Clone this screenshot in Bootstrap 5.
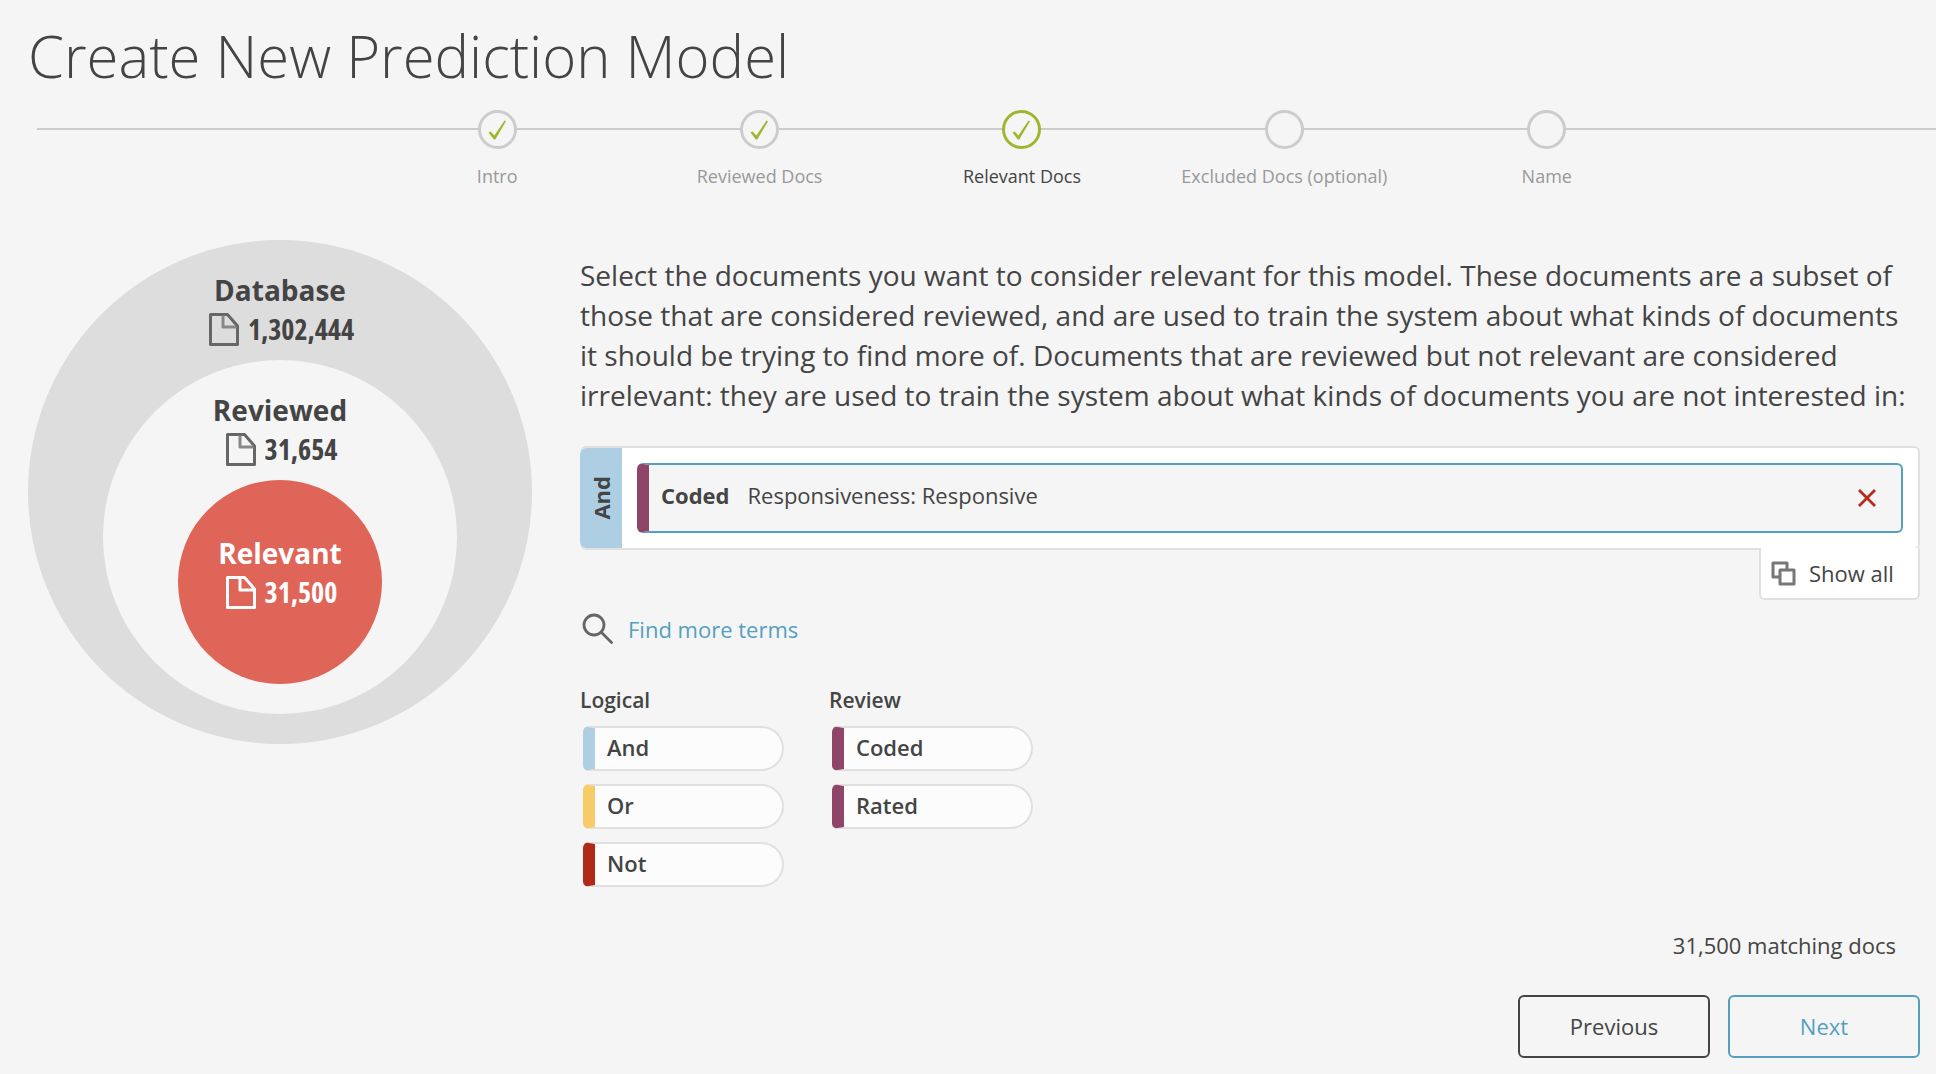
<!DOCTYPE html>
<html lang="en">
<head>
<meta charset="utf-8">
<title>Create New Prediction Model</title>
<link href="https://cdn.jsdelivr.net/npm/bootstrap@5.3.0/dist/css/bootstrap.min.css" rel="stylesheet">
<style>
html,body{height:100%;}
body{background:#f5f5f5;color:#444;font-family:"Open Sans","Noto Sans",sans-serif;font-size:22px;overflow:hidden;}
.page-title{font-family:"Open Sans",sans-serif;font-weight:300;font-size:58px;line-height:82px;margin:15px 0 0 28px;color:#444;}
.stepper{margin:13px 0 0 37px;height:86px;padding-left:329px;background:linear-gradient(#ccc,#ccc) no-repeat 0 18px/100% 2px;}
.step{width:262.4px;flex:none;font-size:18px;color:#999;line-height:24px;}
.step-dot{width:39px;height:39px;flex:none;border:3px solid #ccc;border-radius:50%;background:#f5f5f5;margin-bottom:15px;}
.step.is-current{color:#444;}
.step.is-current .step-dot{border-color:#a2b52e;}
.venn-col{width:504px;margin:44px 0 0 28px;flex:none;}
.venn{border-radius:50%;}
.venn-a{width:504px;height:504px;background:#ddd;padding-top:32px;}
.venn-b{width:354px;height:354px;background:#f5f5f5;padding-top:32px;}
.venn-c{width:204px;height:204px;background:#de6557;color:#fff;padding-top:55px;}
.venn-head{height:88px;text-align:center;}
.venn-c .venn-head{height:auto;}
.venn-name{font-weight:700;font-size:28px;line-height:36px;}
.venn-count{font-weight:700;font-size:28px;line-height:38px;gap:9px;margin-top:2px;padding-left:3px;}
.venn-num{display:inline-block;font-stretch:condensed;}
.main-col{width:1340px;margin:59px 0 0 48px;flex:none;}
.intro{font-size:28px;line-height:40px;margin:0 0 31px;white-space:nowrap;}
.query-box{height:104px;background:#fff;border:2px solid #e0e0e0;border-left:0;border-radius:6px;}
.query-tab{width:42px;background:#aecfe3;border-radius:6px 0 0 6px;font-weight:700;font-size:22px;}
.query-tab span{writing-mode:vertical-rl;transform:rotate(180deg);}
.query-chip{flex:1;height:70px;margin:0 15px 0 15px;background:#f5f5f5;border:2px solid #559fc0;border-left:12px solid #8e4568;border-radius:6px;padding:0 25px 6px 12px;}
.query-chip svg{margin-top:6px;}
.chip-kind{font-weight:700;margin-right:18px;}
.show-all{width:161px;height:52px;background:#fff;border:2px solid #e0e0e0;border-top:0;border-radius:0 0 6px 6px;gap:13px;padding-left:10px;margin-left:auto;margin-top:-2px;line-height:1;}
.find-more{color:#559fc0;gap:15px;margin:13px 0 0 2px;line-height:30px;text-decoration:none;}
.palette{margin-top:41px;gap:45px;}
.pal-title{font-weight:600;font-size:21px;line-height:30px;margin:0 0 11px 0;}
.pill{width:201px;height:45px;margin:0 0 13px 3px;background:#fcfcfc;border:2px solid #e0e0e0;border-left:12px solid;border-radius:6px 23px 23px 6px;font-weight:600;padding:0 0 3px 12px;line-height:1;}
.c-and{border-left-color:#aecfe3;}
.c-or{border-left-color:#f8cb69;}
.c-not{border-left-color:#b12a18;}
.c-rev{border-left-color:#8e4568;}
.match{margin:30px 0 0;padding-right:24px;line-height:30px;text-align:right;}
.foot-btns{gap:18px;margin-top:35px;}
.act-btn{width:192px;height:63px;border:2px solid #444;border-radius:6px;background:transparent;color:#444;font-size:22px;padding:0;}
.act-btn.is-next{border-color:#559fc0;color:#559fc0;}
</style>
</head>
<body>
<h1 class="page-title">Create New Prediction Model</h1>

<div class="stepper d-flex">
  <div class="step d-flex flex-column align-items-center">
    <div class="step-dot d-flex align-items-center justify-content-center"><svg width="33" height="33" viewBox="0 0 33 33"><path fill="#a2b52e" d="M7.500 19.500 9.600 18.500 13.400 22.400 23.500 7.500 25 8.300 14.300 26.500 12.800 26.500Z"/></svg></div>
    <div>Intro</div>
  </div>
  <div class="step d-flex flex-column align-items-center">
    <div class="step-dot d-flex align-items-center justify-content-center"><svg width="33" height="33" viewBox="0 0 33 33"><path fill="#a2b52e" d="M7.500 19.500 9.600 18.500 13.400 22.400 23.500 7.500 25 8.300 14.300 26.500 12.800 26.500Z"/></svg></div>
    <div>Reviewed Docs</div>
  </div>
  <div class="step is-current d-flex flex-column align-items-center">
    <div class="step-dot d-flex align-items-center justify-content-center"><svg width="33" height="33" viewBox="0 0 33 33"><path fill="#a2b52e" d="M7.500 19.500 9.600 18.500 13.400 22.400 23.500 7.500 25 8.300 14.300 26.500 12.800 26.500Z"/></svg></div>
    <div>Relevant Docs</div>
  </div>
  <div class="step d-flex flex-column align-items-center">
    <div class="step-dot"></div>
    <div>Excluded Docs (optional)</div>
  </div>
  <div class="step d-flex flex-column align-items-center">
    <div class="step-dot"></div>
    <div>Name</div>
  </div>
</div>

<div class="d-flex">
  <div class="venn-col">
    <div class="venn venn-a d-flex flex-column align-items-center">
      <div class="venn-head">
        <div class="venn-name">Database</div>
        <div class="venn-count d-flex align-items-center justify-content-center">
          <svg width="30" height="33" viewBox="0 0 30 33" fill="none" stroke="#666" stroke-width="3" stroke-linejoin="round"><path d="M1.500 1.500H18.500L28.500 13V31.500H1.500Z"/><path d="M14 2.500V14H27.500" stroke="#888"/></svg>
          <span class="venn-num">1,302,444</span>
        </div>
      </div>
      <div class="venn venn-b d-flex flex-column align-items-center">
        <div class="venn-head">
          <div class="venn-name">Reviewed</div>
          <div class="venn-count d-flex align-items-center justify-content-center">
            <svg width="30" height="33" viewBox="0 0 30 33" fill="none" stroke="#666" stroke-width="3" stroke-linejoin="round"><path d="M1.500 1.500H18.500L28.500 13V31.500H1.500Z"/><path d="M14 2.500V14H27.500" stroke="#888"/></svg>
            <span class="venn-num">31,654</span>
          </div>
        </div>
        <div class="venn venn-c d-flex flex-column align-items-center">
          <div class="venn-head">
            <div class="venn-name">Relevant</div>
            <div class="venn-count d-flex align-items-center justify-content-center">
              <svg width="30" height="33" viewBox="0 0 30 33" fill="none" stroke="#fff" stroke-width="3" stroke-linejoin="round"><path d="M1.500 1.500H18.500L28.500 13V31.500H1.500Z"/><path d="M14 2.500V14H27.500"/></svg>
              <span class="venn-num">31,500</span>
            </div>
          </div>
        </div>
      </div>
    </div>
  </div>

  <div class="main-col">
    <p class="intro">Select the documents you want to consider relevant for this model. These documents are a subset of<br>those that are considered reviewed, and are used to train the system about what kinds of documents<br>it should be trying to find more of. Documents that are reviewed but not relevant are considered<br>irrelevant: they are used to train the system about what kinds of documents you are not interested in:</p>

    <div class="query-box d-flex align-items-center">
      <div class="query-tab align-self-stretch d-flex align-items-center justify-content-center"><span>And</span></div>
      <div class="query-chip d-flex align-items-center">
        <span class="chip-kind">Coded</span>
        <span>Responsiveness: Responsive</span>
        <svg class="ms-auto" width="18" height="18" viewBox="0 0 18 18" stroke="#b52a1a" stroke-width="2.800" fill="none"><path d="M1 1 17 17M17 1 1 17"/></svg>
      </div>
    </div>
    <div class="show-all d-flex align-items-center">
      <svg width="25" height="25" viewBox="0 0 25 25" fill="none" stroke="#777" stroke-width="3" stroke-linejoin="round"><path d="M9 16H2V2H16V9"/><rect x="9" y="9" width="14" height="14"/></svg>
      <span>Show all</span>
    </div>

    <a class="find-more d-flex align-items-center" href="#">
      <svg width="31" height="31" viewBox="0 0 31 31" fill="none" stroke="#666" stroke-width="2.800" stroke-linecap="round"><circle cx="12" cy="12" r="10"/><path d="M19.500 19.500 29.500 29.500"/></svg>
      <span>Find more terms</span>
    </a>

    <div class="palette d-flex">
      <div>
        <div class="pal-title">Logical</div>
        <div class="pill c-and d-flex align-items-center">And</div>
        <div class="pill c-or d-flex align-items-center">Or</div>
        <div class="pill c-not d-flex align-items-center">Not</div>
      </div>
      <div>
        <div class="pal-title">Review</div>
        <div class="pill c-rev d-flex align-items-center">Coded</div>
        <div class="pill c-rev d-flex align-items-center">Rated</div>
      </div>
    </div>

    <div class="match">31,500 matching docs</div>
    <div class="foot-btns d-flex justify-content-end">
      <button type="button" class="btn act-btn">Previous</button>
      <button type="button" class="btn act-btn is-next">Next</button>
    </div>
  </div>
</div>

<script src="https://cdn.jsdelivr.net/npm/bootstrap@5.3.0/dist/js/bootstrap.bundle.min.js"></script>
</body>
</html>
